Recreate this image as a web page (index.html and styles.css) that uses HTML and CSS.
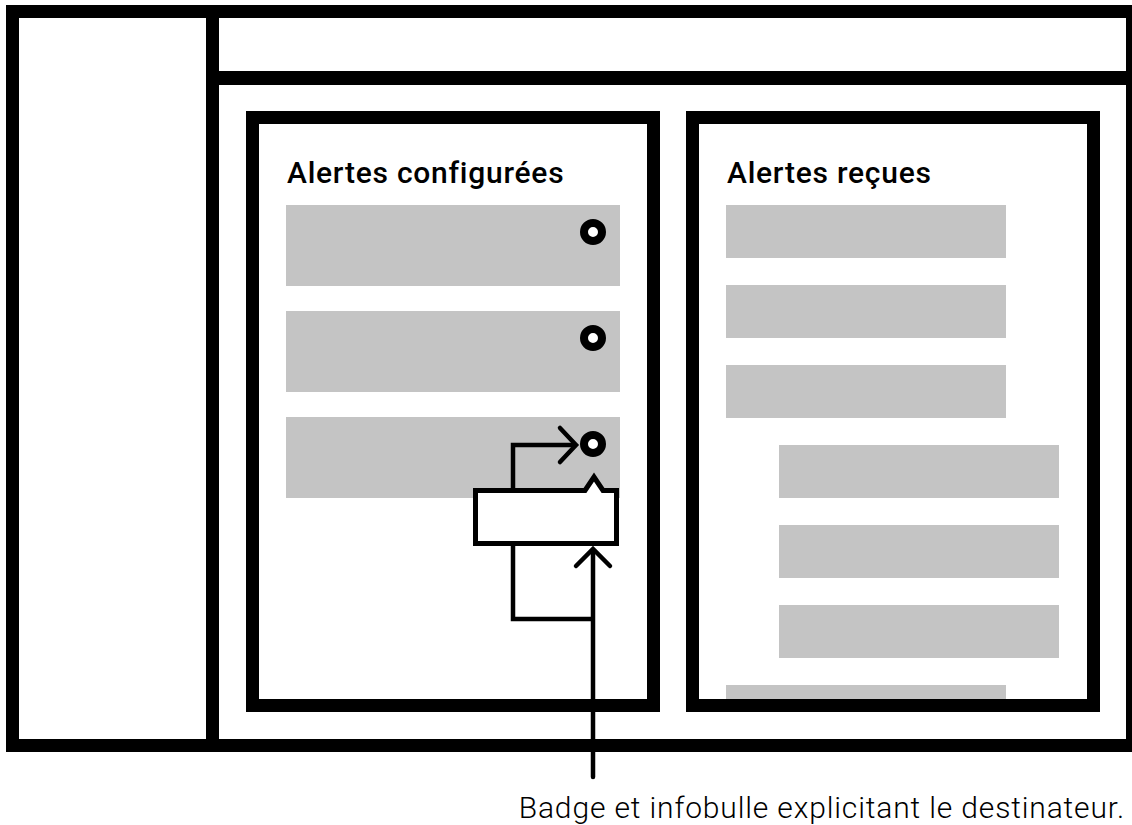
FILE: index.html
```html
<!doctype html>
<html lang="fr">
<head>
    <meta charset="UTF-8">
    <meta name="viewport" content="width=device-width, initial-scale=1.0">
    <title>Alertes - infobulle destinateur</title>
    <link rel="stylesheet" href="styles.css">
</head>
<body>
    <div class="page">
        <div class="frame">
            <div class="sidebar"></div>
            <div class="main">
                <div class="header"></div>
                <div class="content">
                    <!-- - alertes configurées -->
                    <section class="panel">
                        <h2 class="panel-title">Alertes configurées</h2>
                        <div class="list list-config">
                            <div class="row row-config"><span class="badge"></span></div>
                            <div class="row row-config"><span class="badge"></span></div>
                            <div class="row row-config"><span class="badge"></span></div>
                        </div>
                    </section>
                    <!-- - alertes reçues -->
                    <section class="panel">
                        <h2 class="panel-title">Alertes reçues</h2>
                        <div class="list list-received">
                            <div class="row row-received"></div>
                            <div class="row row-received"></div>
                            <div class="row row-received"></div>
                            <div class="row row-received row-indent"></div>
                            <div class="row row-received row-indent"></div>
                            <div class="row row-received row-indent"></div>
                            <div class="row row-received"></div>
                        </div>
                    </section>
                </div>
            </div>
        </div>
        <p class="caption">Badge et infobulle explicitant le destinateur.</p>

        <!-- - annotation : infobulle + flèches -->
        <svg class="annotation" width="1132" height="825" viewBox="0 0 1132 825">
            <g fill="none" stroke="#000" stroke-width="4.5">
                <path d="M513 490 V445 H575"/>
                <path d="M560 428 L576 445 L560 462" stroke-linecap="round" stroke-linejoin="miter"/>
                <path d="M513 543 V619 H593"/>
                <path d="M593 550 V777" stroke-linecap="round"/>
                <path d="M576 566 L593 549 L610 566" stroke-linecap="round"/>
            </g>
            <path class="tooltip" d="M475.5 490.5 H585 L594 477 L603 490.5 H616.5 V543.5 H475.5 Z"
                  fill="#fff" stroke="#000" stroke-width="5"/>
        </svg>
    </div>
</body>
</html>
```

FILE: styles.css
```css
* {margin: 0; padding: 0; box-sizing: border-box;}
html, body {background: #fff; overflow: hidden;}
body {width: 1132px; height: 825px; font-family: Roboto, "Noto Sans", sans-serif; color: #000;}

.page {position: relative; width: 1132px; height: 825px; padding: 5px 0 0 6px;}

/* - cadre principal */
.frame {
    display: flex;
    width: 1133px; height: 747px;
    border: 13px solid #000;
}
.sidebar {flex: 0 0 200px; border-right: 13px solid #000;}
.main {flex: 1; display: flex; flex-direction: column; min-height: 0;}
.header {flex: 0 0 67px; border-bottom: 14px solid #000;}
.content {
    flex: 1;
    min-height: 0;
    overflow: hidden;
    display: flex;
    gap: 26px;
    padding: 26px 26px 27px 27px;
}

/* - panneaux */
.panel {
    flex: 0 0 414px;
    min-height: 0;
    border: 13px solid #000;
    padding: 33px 27px 0 27px;
    overflow: hidden;
}
.panel-title {
    font-size: 30px;
    font-weight: 500;
    line-height: 32px;
    margin-bottom: 16px;
    padding-left: 1px;
    letter-spacing: 0.75px;
}
.list {display: flex; flex-direction: column;}
.list-config {gap: 25px;}
.list-received {gap: 27px;}

.row {background: #c4c4c4;}
.row-config {
    height: 81px;
    display: flex;
    justify-content: flex-end;
    align-items: flex-start;
    padding: 14px;
}
.row-received {width: 280px; height: 53px; flex-shrink: 0;}
.row-indent {margin-left: 53px;}

/* - badge destinateur */
.badge {
    display: block;
    width: 26px; height: 26px;
    border: 8px solid #000;
    border-radius: 50%;
    background: #fff;
}

/* - légende */
.caption {
    margin-top: 40px;
    padding-right: 7px;
    text-align: right;
    font-size: 30px;
    font-weight: 300;
    line-height: 32px;
    letter-spacing: 0.85px;
}

.annotation {position: absolute; top: 0; left: 0; pointer-events: none;}
```
